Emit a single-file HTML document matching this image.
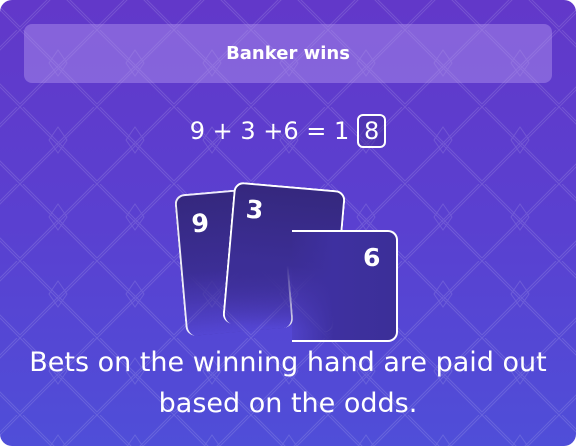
<html><head><style>
body{margin:0;width:576px;height:446px;overflow:hidden;font-family:"DejaVu Sans","Liberation Sans",sans-serif}
.bg{position:absolute;left:0;top:0;width:576px;height:446px;border-radius:12px;background:linear-gradient(180deg,#6238c9 0%,#5a40d0 50%,#4f4ed8 100%);overflow:hidden}
.banner{position:absolute;left:24px;top:24px;width:528px;height:59px;border-radius:8px;background:rgba(180,150,240,0.45);color:#fff;font-weight:bold;font-size:18px;text-align:center;line-height:59px}
.eq{position:absolute;left:0;width:576px;top:114px;text-align:center;color:#fff;font-size:24px}
.box{display:inline-block;border:2px solid #fff;border-radius:6px;padding:0 5px;line-height:30px;background:rgba(60,40,140,.4)}
.card{position:absolute;border:2px solid #fff;border-radius:10px;background:linear-gradient(180deg,#35287e 0%,#3c2e96 55%,rgba(80,70,210,0) 100%);color:#fff;font-weight:bold;font-size:25px}
.txt{position:absolute;left:0;width:576px;top:342px;text-align:center;color:#fff;font-size:27px;line-height:41px}
</style></head><body>
<div class="bg">
<svg width="576" height="446" style="position:absolute;left:0;top:0;opacity:.13">
<defs><pattern id="p" width="77" height="77" patternUnits="userSpaceOnUse" x="20" y="30">
<path d="M0 0L77 77M3 0L80 77M77 0L0 77M74 0L-3 77" stroke="#fff" stroke-width="1" fill="none"/>
<path d="M38 20l9 13-9 13-9-13z" stroke="#fff" fill="none"/>
</pattern></defs>
<rect width="576" height="446" fill="url(#p)"/></svg>
<div class="banner">Banker wins</div>
<div class="eq">9 + 3 +6 = 1 <span class="box">8</span></div>
<div class="card" style="left:180px;top:190px;width:104px;height:140px;transform:rotate(-5deg);border-bottom:none;border-color:rgba(255,255,255,.9)"><span style="position:absolute;left:13px;top:14px">9</span></div>
<div class="card" style="left:228px;top:186px;width:108px;height:140px;transform:rotate(5deg);border-bottom:none"><span style="position:absolute;left:12px;top:10px">3</span></div>
<div class="card" style="left:292px;top:230px;width:104px;height:108px;border-left:none;border-top-left-radius:0;border-bottom-left-radius:0;background:linear-gradient(90deg,rgba(60,45,150,.2),#3e30a0 40%,#3c2f98)"><span style="position:absolute;right:16px;top:10px;display:inline-block;transform:rotate(180deg)">9</span></div>
<div class="txt">Bets on the winning hand are paid out<br>based on the odds.</div>
</div>
</body></html>
